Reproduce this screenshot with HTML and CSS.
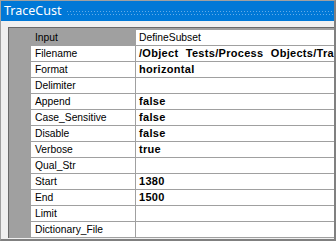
FILE: index.html
```html
<!DOCTYPE html>
<html>
<head>
<meta charset="utf-8">
<link rel="stylesheet" href="styles.css">
</head>
<body>
<div class="window">
  <div class="titlebar">
    <span class="title">TraceCust</span>
    <span class="grip"><span class="dots a"></span><span class="dots b"></span></span>
  </div>
  <div class="panel">
    <div class="grid">
      <div class="row cat"><div class="label">Input</div><div class="value">DefineSubset</div></div>
      <div class="row"><div class="label">Filename</div><div class="value bold">/Object Tests/Process Objects/TraceCust.txt</div></div>
      <div class="row"><div class="label">Format</div><div class="value bold">horizontal</div></div>
      <div class="row"><div class="label">Delimiter</div><div class="value"></div></div>
      <div class="row"><div class="label">Append</div><div class="value bold">false</div></div>
      <div class="row"><div class="label">Case_Sensitive</div><div class="value bold">false</div></div>
      <div class="row"><div class="label">Disable</div><div class="value bold">false</div></div>
      <div class="row"><div class="label">Verbose</div><div class="value bold">true</div></div>
      <div class="row"><div class="label">Qual_Str</div><div class="value"></div></div>
      <div class="row"><div class="label">Start</div><div class="value bold">1380</div></div>
      <div class="row"><div class="label">End</div><div class="value bold">1500</div></div>
      <div class="row"><div class="label">Limit</div><div class="value"></div></div>
      <div class="row"><div class="label">Dictionary_File</div><div class="value"></div></div>
    </div>
  </div>
</div>
</body>
</html>
```
FILE: styles.css
```css
html, body {
  margin: 0;
  padding: 0;
  background: #f0f0f0;
}
.window {
  width: 333px;
  height: 238px;
  border-top: 1px solid #a0a0a0;
  border-left: 1px solid #a0a0a0;
  border-right: 2px solid #808080;
  border-bottom: 2px solid #808080;
  overflow: hidden;
  background: #f0f0f0;
  font-family: "Liberation Sans", Arial, sans-serif;
}
.titlebar {
  height: 20px;
  background: #0078d7;
  display: flex;
  align-items: center;
}
.title {
  color: #ffffff;
  font-family: "Noto Sans", "Liberation Sans", sans-serif;
  font-size: 12.5px;
  padding-left: 3px;
  line-height: 20px;
  white-space: nowrap;
}
.grip {
  flex: 1;
  margin-left: 6px;
  display: flex;
  flex-direction: column;
  gap: 2px;
  margin-top: 3px;
}
.dots {
  display: block;
  height: 1px;
  background-image: repeating-linear-gradient(90deg, #62abe8 0 1px, transparent 1px 3px);
}
.dots.b {
  background-position: 1px 0;
}
.panel {
  padding: 6px 0 0 7px;
}
.grid {
  width: 330px;
  border-top: 1px solid #696969;
  border-left: 1px solid #696969;
  background: #a0a0a0;
  padding: 2px 0 0 22px;
  overflow: hidden;
}
.row {
  display: flex;
  height: 15px;
  border-bottom: 1px solid #a0a0a0;
  font-size: 10.3px;
  line-height: 15px;
  color: #000;
}
.label {
  width: 100px;
  flex: none;
  padding-left: 4px;
  background: #ffffff;
  border-right: 1px solid #a0a0a0;
  white-space: nowrap;
}
.value {
  flex: 1;
  padding-left: 3px;
  background: #ffffff;
  white-space: nowrap;
  overflow: hidden;
  text-overflow: clip;
}
.row.cat .label {
  background: #a0a0a0;
}
.bold {
  font-weight: bold;
  font-size: 11px;
  letter-spacing: 0.3px;
  word-spacing: 4px;
}
```
